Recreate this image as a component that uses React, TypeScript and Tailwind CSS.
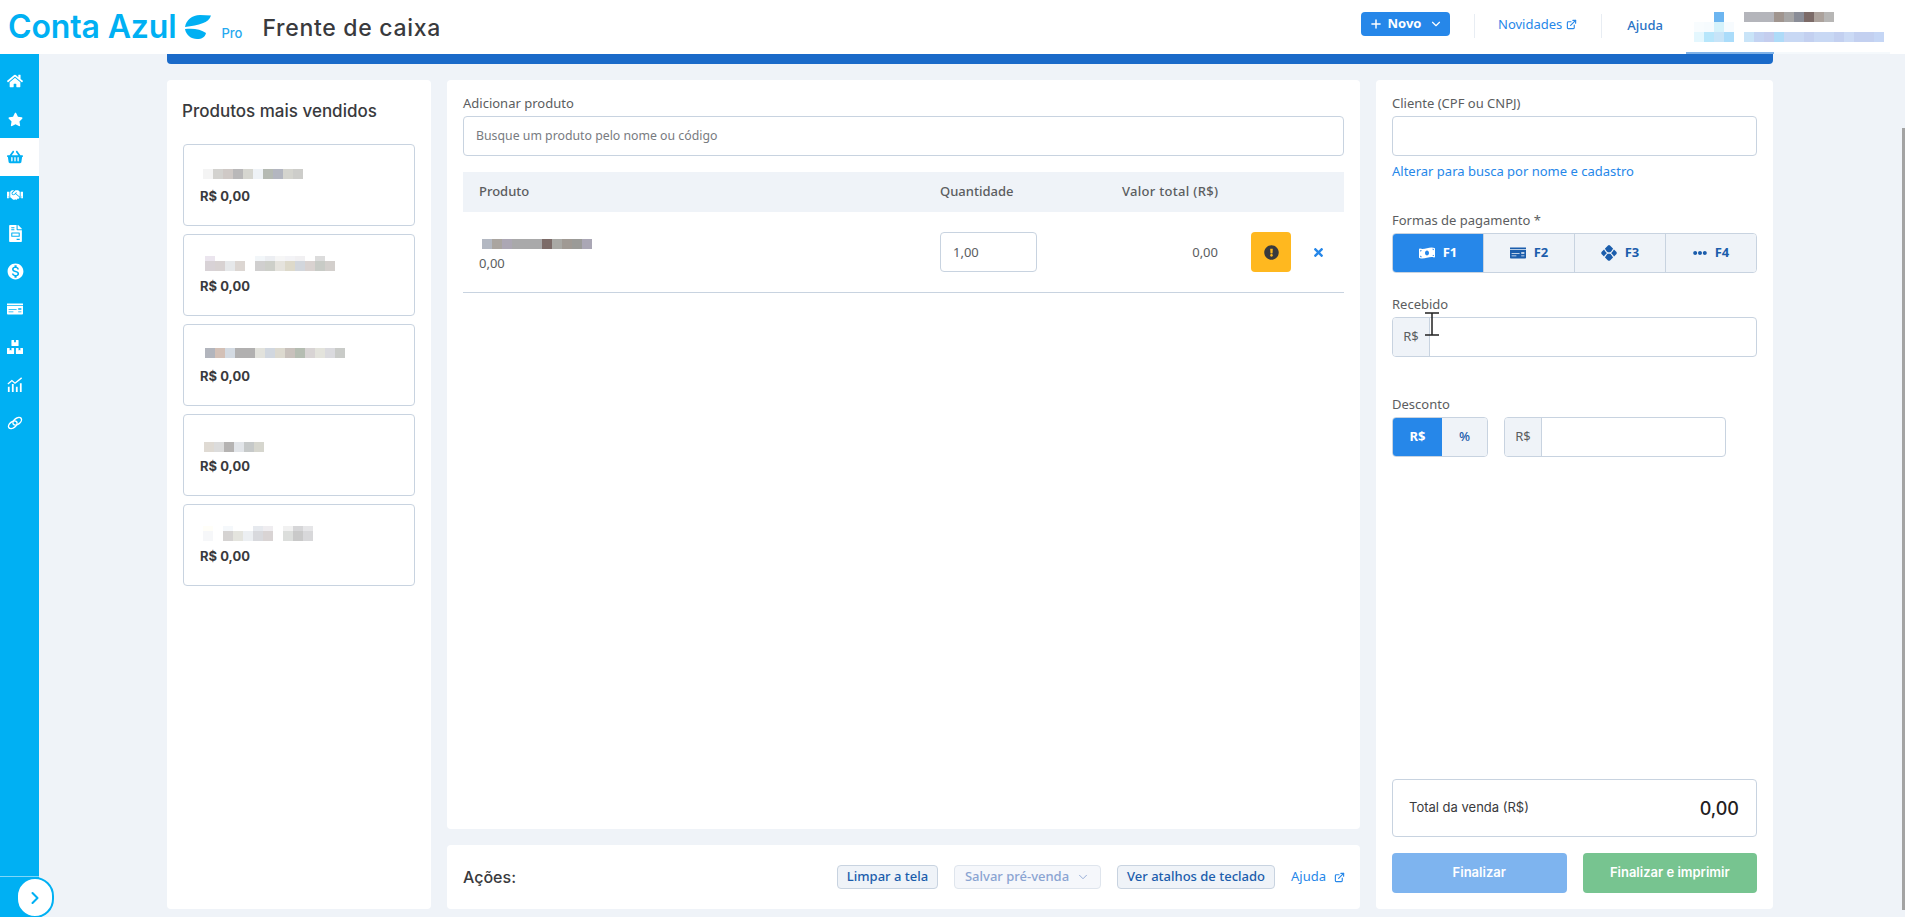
import { ChevronDown, ChevronRight, ExternalLink, Plus } from 'lucide-react'
import {
  FaBoxes,
  FaEllipsisH,
  FaExclamationCircle,
  FaFileInvoice,
  FaHandshake,
  FaHome,
  FaMoneyBillWave,
  FaMoneyCheck,
  FaShoppingBasket,
  FaStar,
  FaTimes,
} from 'react-icons/fa'
import { MdMonetizationOn } from 'react-icons/md'

const sans = 'font-["Noto_Sans",sans-serif]'
const display = 'font-["Inter",sans-serif]'

function ChartIcon() {
  return (
    <svg viewBox="0 0 18 18" className="w-[16px] h-[16px]" fill="none" stroke="currentColor">
      <path d="M1 8 L5.5 4 L9 7 L16.5 1" strokeWidth="1.5" />
      <path d="M2 17 V11 M6.5 17 V8 M11 17 V11 M15.5 17 V7" strokeWidth="2" />
    </svg>
  )
}

function LinkIcon() {
  return (
    <svg viewBox="0 0 18 18" className="w-[16px] h-[16px]" fill="none" stroke="currentColor" strokeWidth="1.6">
      <ellipse cx="6.5" cy="11" rx="5.5" ry="3.4" transform="rotate(-38 6.5 11)" />
      <ellipse cx="11.5" cy="7" rx="5.5" ry="3.4" transform="rotate(-38 11.5 7)" />
    </svg>
  )
}

function PixIcon() {
  return (
    <svg viewBox="0 0 16 16" className="w-4 h-4">
      <path
        d="M8 0 Q8.6 0 9 .5 L15.5 7 Q16 8 15.5 9 L9 15.5 Q8 16 7 15.5 L.5 9 Q0 8 .5 7 L7 .5 Q7.4 0 8 0 Z"
        fill="#1b5dac"
      />
      <path d="M3 3 Q8 13.5 13 3 M3 13 Q8 2.5 13 13" fill="none" stroke="#eff3f8" strokeWidth="1.2" />
    </svg>
  )
}

function LeafLogo() {
  return (
    <svg viewBox="0 0 26 24" className="w-[26px] h-[24px]" fill="#00b0f3">
      <path d="M26 .5 C24 8 14 10 0 12 C1 5 7 0 15 0 Z" />
      <path d="M0 14 C8 13 16 14 21 18 C20 22 17 24 12 24 C6 24 1 20 0 14 Z" />
    </svg>
  )
}

function Mosaic({ rows }: { rows: string[][] }) {
  return (
    <div className="flex flex-col">
      {rows.map((row, i) => (
        <div key={i} className="flex">
          {row.map((c, j) => (
            <div key={j} className="w-[10px] h-[10px]" style={{ backgroundColor: c }} />
          ))}
        </div>
      ))}
    </div>
  )
}

const w = '#ffffff'

const products = [
  {
    pad: 'pt-[24px] pl-[3px]',
    rows: [['#f4f4f4', '#d3d2cf', '#cfc9c6', '#b9b8b9', '#d6d6d0', '#eef2f6', '#b5bab3', '#b3b6c0', '#d4d4ce', '#cdcdca']],
  },
  {
    pad: 'pt-[21px] pl-[5px]',
    clipped: true,
    rows: [
      ['#ebe5ee', w, w, w, w, '#f2f6f9', '#eceef2', '#f6f6f6', '#f3f3f6', '#f1f0f2', w, '#dcdcdc'],
      ['#d8d2d6', '#d8d2d2', '#e6e8ea', '#dcd6d2', w, '#d0cfcf', '#cdcfc9', '#e5e3dd', '#ddd9ca', '#d2d6dc', '#d9d2d0', '#c8cbc6', '#d3cfcc'],
    ],
  },
  {
    pad: 'pt-[23px] pl-[5px]',
    rows: [['#b2b5bd', '#d3c0b6', '#d3dae2', '#b1b0b0', '#b1b0b0', '#e2e2dc', '#d1d7df', '#dcd9cf', '#c8c1bc', '#b5bdb2', '#d8d4d4', '#e3e3dc', '#dadade', '#c9cbc8']],
  },
  {
    pad: 'pt-[27px] pl-[4px]',
    rows: [['#dfdad3', '#dcdcdc', '#b5b3b2', '#e2e5e9', '#c6c9c9', '#d6d6ce']],
  },
  {
    pad: 'pt-[21px] pl-[3px]',
    clipped: true,
    rows: [
      ['#fffef8', w, '#f5f8fb', w, w, '#e6e9ee', '#efedf0', w, '#f1f1f1', '#d6d6d8', '#e6e6e8'],
      ['#f6f7f9', w, '#d5d3d2', '#e4e4de', '#eceff2', '#d8d9dd', '#d9d4d4', w, '#dcdedc', '#c9c9c9', '#d8d8da'],
    ],
  },
]

const sideItems = [
  <FaHome className="w-[16px] h-[16px]" />,
  <FaStar className="w-[15px] h-[15px]" />,
  <FaShoppingBasket className="w-[16px] h-[16px]" />,
  <FaHandshake className="w-[16px] h-[16px]" />,
  <FaFileInvoice className="w-[13px] h-[17px]" />,
  <MdMonetizationOn className="w-[19px] h-[19px]" />,
  <FaMoneyCheck className="w-[16px] h-[16px]" />,
  <FaBoxes className="w-[16px] h-[16px]" />,
  <ChartIcon />,
  <LinkIcon />,
]

const payments = [
  { key: 'F1', icon: <FaMoneyBillWave className="w-4 h-4" />, active: true },
  { key: 'F2', icon: <FaMoneyCheck className="w-4 h-4" /> },
  { key: 'F3', icon: <PixIcon /> },
  { key: 'F4', icon: <FaEllipsisH className="w-[14px] h-[14px]" /> },
]

function Sidebar() {
  return (
    <aside className="relative w-[39px] shrink-0 bg-[#00b0f3] text-white flex flex-col">
      <ul className="pt-[8px]">
        {sideItems.map((icon, i) => (
          <li
            key={i}
            className={`h-[38px] pr-[9px] flex items-center justify-center ${i === 2 ? 'bg-white text-[#00b0f3]' : ''}`}
          >
            {icon}
          </li>
        ))}
      </ul>
      <div className="mt-auto h-[41px] border-t border-[#7fd6f8]" />
      <button
        type="button"
        className="absolute left-[16px] bottom-[-1px] w-[38px] h-[41px] rounded-full bg-white border-2 border-[#00b0f3] flex items-center justify-center text-[#00b0f3]"
      >
        <ChevronRight className="w-5 h-5" strokeWidth={2.5} />
      </button>
    </aside>
  )
}

function Header() {
  return (
    <header className={`relative h-[54px] shrink-0 bg-white flex items-center ${sans}`}>
      <span className={`ml-[8px] text-[32px] leading-none font-semibold text-[#00b0f3] tracking-[-0.15px] ${display}`}>
        Conta Azul
      </span>
      <span className="ml-[9px]">
        <LeafLogo />
      </span>
      <span className={`ml-[10px] mt-[14px] text-[13px] font-medium text-[#26a9ef] ${display}`}>Pro</span>
      <h1 className={`ml-[20px] mt-[2px] text-[23px] font-medium text-[#393a3d] tracking-[0.7px] ${display}`}>Frente de caixa</h1>

      <button
        type="button"
        className="ml-auto mb-[6px] w-[89px] h-[24px] rounded-[4px] bg-[#2687e9] text-white text-[13px] font-bold flex items-center justify-center gap-[5px]"
      >
        <Plus className="w-[14px] h-[14px]" strokeWidth={2.5} />
        Novo
        <ChevronDown className="w-[14px] h-[14px] ml-[2px]" strokeWidth={2} />
      </button>
      <div className="ml-[24px] mb-[2px] w-[1px] h-[24px] bg-[#e8edf3]" />
      <a className="ml-[23px] mb-[5px] text-[13px] text-[#2687e9] flex items-center gap-[4px]">
        Novidades
        <ExternalLink className="w-[11px] h-[11px]" strokeWidth={2.5} />
      </a>
      <div className="ml-[24px] mb-[2px] w-[1px] h-[24px] bg-[#e8edf3]" />
      <a className="ml-[25px] mb-[2px] text-[13px] font-medium text-[#2a73c5]">Ajuda</a>

      <div className="ml-[31px] w-[211px] flex items-start gap-[10px] self-start pt-[12px]">
        <Mosaic
          rows={[
            [w, w, '#6cb5f0', w],
            ['#f8fcfe', '#f6fbfe', '#d5f2fb', '#f7fbfe'],
            ['#e4f7fe', '#b7e6fb', '#c7e4f8', '#aadcfa'],
          ]}
        />
        <div className="flex flex-col gap-[10px]">
          <Mosaic rows={[['#b4b5bb', '#b4b5bb', '#b4b5bb', '#a0958f', '#a7a6a6', '#8a8d97', '#7c6b68', '#aca29c', '#b7b6b5']]} />
          <Mosaic
            rows={[
              ['#c9e4f8', '#c3d3f2', '#c4cdee', '#aedbf8', '#c8d8f4', '#c8d8f4', '#c3d0f0', '#c8d8f4', '#c8d8f4', '#c3d0f0', '#cbdaf5', '#c3d0f0', '#c3d0f0', '#c5d6f5'],
            ]}
          />
        </div>
      </div>
      <div className="absolute left-[1686px] right-[15px] bottom-0 h-[2px] bg-[#f5f9fc]">
        <div className="w-[88px] h-[2px] bg-[#7fb2e8]" />
      </div>
    </header>
  )
}

function FieldLabel({ children }: { children: React.ReactNode }) {
  return <label className="block text-[13px] leading-[18px] text-[#5b5d60]">{children}</label>
}

function ProductsPanel() {
  return (
    <section className="w-[264px] shrink-0 bg-white rounded-[4px] pl-[15px] pr-[16px] pt-[20px]">
      <h2 className={`text-[17px] leading-[22px] font-medium text-[#393a3d] ${display}`}>Produtos mais vendidos</h2>
      <ul className="ml-[1px] mt-[22px] flex flex-col gap-[8px]">
        {products.map((p, i) => (
          <li key={i} className="relative h-[82px] rounded-[4px] border border-[#c8d3e0] pl-[16px]">
            <div className={`h-[42px] ${p.pad}`}>
              <div className={p.clipped ? 'h-[15px] overflow-hidden flex flex-col justify-end' : ''}>
                <Mosaic rows={p.rows} />
              </div>
            </div>
            <p className={`absolute left-[16px] top-[42px] text-[13px] leading-[18px] font-bold text-[#393a3d] ${display}`}>
              R$ 0,00
            </p>
          </li>
        ))}
      </ul>
    </section>
  )
}

function SalePanel() {
  return (
    <section className="flex-1 bg-white rounded-[4px] px-[16px] pt-[14px]">
      <FieldLabel>Adicionar produto</FieldLabel>
      <input
        readOnly
        placeholder="Busque um produto pelo nome ou código"
        className="mt-[4px] w-full h-[40px] rounded-[4px] border border-[#c8d3e0] px-[12px] pb-[2px] text-[12.3px] placeholder:text-[#787b7f] outline-none"
      />
      <div className="mt-[16px] h-[40px] bg-[#eff3f8] flex items-center text-[13px] font-medium text-[#5b5d60]">
        <span className="ml-[16px] w-[461px]">Produto</span>
        <span className="w-[182px]">Quantidade</span>
        <span className="tracking-[0.3px]">Valor total (R$)</span>
      </div>
      <div className="h-[81px] border-b border-[#c8d3e0] flex items-center text-[13px] leading-[18px] text-[#5b5d60]">
        <div className="ml-[16px] w-[461px] flex flex-col gap-[5px] pt-[7px]">
          <div className="ml-[3px]">
            <Mosaic rows={[['#b3b8c2', '#aaa5a0', '#aca7b4', '#a9a9aa', '#a9a9aa', '#a9a9aa', '#7c6b68', '#a9a9a5', '#a09a94', '#9b9b98', '#aaa7b5']]} />
          </div>
          <span>0,00</span>
        </div>
        <div className="w-[97px] h-[40px] rounded-[4px] border border-[#c8d3e0] flex items-center pl-[12px]">1,00</div>
        <span className="w-[181px] text-right">0,00</span>
        <button type="button" className="ml-[33px] w-[40px] h-[40px] rounded-[4px] bg-[#ffb81f] flex items-center justify-center">
          <FaExclamationCircle className="w-[15px] h-[15px] text-[#393a3d]" />
        </button>
        <button type="button" className="ml-[21px] text-[#2687e9]">
          <FaTimes className="w-[13px] h-[13px]" />
        </button>
      </div>
    </section>
  )
}

function ActionsBar() {
  return (
    <section className="h-[64px] shrink-0 bg-white rounded-[4px] pl-[16px] pr-[15px] flex items-center">
      <span className={`text-[16px] font-medium text-[#393a3d] ${display}`}>Ações:</span>
      <button type="button" className="ml-auto w-[101px] h-[24px] rounded-[4px] border border-[#c8d3e0] bg-[#eff3f8] text-[13px] font-medium text-[#1b5dac]">
        Limpar a tela
      </button>
      <button type="button" className="ml-[16px] w-[147px] h-[24px] rounded-[4px] border border-[#dfe5ed] bg-[#f5f7fb] text-[13px] font-medium text-[#8aa4d2] flex items-center justify-center gap-[7px]">
        Salvar pré-venda
        <ChevronDown className="w-[14px] h-[14px]" strokeWidth={1.5} />
      </button>
      <button type="button" className="ml-[16px] w-[158px] h-[24px] rounded-[4px] border border-[#c8d3e0] bg-[#eff3f8] text-[13px] font-medium text-[#1b5dac]">
        Ver atalhos de teclado
      </button>
      <a className="ml-[16px] text-[13px] text-[#2687e9] flex items-center gap-[8px]">
        Ajuda
        <ExternalLink className="w-[11px] h-[11px]" strokeWidth={2.5} />
      </a>
    </section>
  )
}

function Addon() {
  return (
    <span className="w-[37px] shrink-0 bg-[#eff3f8] border-r border-[#c8d3e0] flex items-center justify-center text-[13px] text-[#5b5d60]">
      R$
    </span>
  )
}

function CheckoutPanel() {
  return (
    <section className="relative w-[397px] shrink-0 bg-white rounded-[4px] px-[16px] pt-[14px] pb-[16px] flex flex-col">
      <FieldLabel>Cliente (CPF ou CNPJ)</FieldLabel>
      <div className="mt-[4px] h-[40px] rounded-[4px] border border-[#c8d3e0]" />
      <a className="mt-[6px] text-[13px] leading-[18px] text-[#2687e9]">Alterar para busca por nome e cadastro</a>

      <div className="mt-[31px]">
        <FieldLabel>Formas de pagamento *</FieldLabel>
      </div>
      <div className="mt-[4px] h-[40px] rounded-[4px] border border-[#c8d3e0] flex overflow-hidden">
        {payments.map((p) => (
          <button
            key={p.key}
            type="button"
            className={`flex-1 flex items-center justify-center gap-[8px] text-[13px] font-bold border-r border-[#c8d3e0] last:border-r-0 ${
              p.active ? 'bg-[#2687e9] text-white' : 'bg-[#eff3f8] text-[#1b5dac]'
            }`}
          >
            {p.icon}
            {p.key}
          </button>
        ))}
      </div>

      <div className="mt-[22px]">
        <FieldLabel>Recebido</FieldLabel>
      </div>
      <div className="mt-[4px] h-[40px] rounded-[4px] border border-[#c8d3e0] flex overflow-hidden">
        <Addon />
      </div>

      <div className="mt-[38px]">
        <FieldLabel>Desconto</FieldLabel>
      </div>
      <div className="mt-[4px] flex">
        <div className="w-[96px] h-[40px] rounded-[4px] border border-[#c8d3e0] flex overflow-hidden text-[13px] font-bold">
          <span className="w-[49px] bg-[#2687e9] text-white flex items-center justify-center">R$</span>
          <span className="flex-1 bg-[#eff3f8] text-[#1b5dac] flex items-center justify-center font-medium">%</span>
        </div>
        <div className="ml-[16px] w-[222px] h-[40px] rounded-[4px] border border-[#c8d3e0] flex overflow-hidden">
          <Addon />
        </div>
      </div>

      <div className="mt-auto h-[58px] rounded-[4px] border border-[#c8d3e0] flex items-center justify-between pl-[16px] pr-[17px]">
        <span className={`text-[13px] text-[#393a3d] ${display}`}>Total da venda (R$)</span>
        <span className={`text-[18px] font-medium text-[#1f2022] ${display}`}>0,00</span>
      </div>
      <div className="mt-[16px] flex gap-[16px]">
        <button type="button" className={`flex-1 h-[40px] rounded-[4px] bg-[#7eb4ef] text-white text-[13px] font-semibold ${display}`}>
          Finalizar
        </button>
        <button type="button" className={`flex-1 h-[40px] rounded-[4px] bg-[#77c490] text-white text-[13px] font-semibold ${display}`}>
          Finalizar e imprimir
        </button>
      </div>

      {/* mouse cursor caught in the screenshot */}
      <svg viewBox="0 0 14 24" className="absolute left-[49px] top-[232px] w-[14px] h-[24px]" fill="none" stroke="#222" strokeWidth="1.5">
        <path d="M0 1 H14 M0 23 H14 M7 1 V23" />
      </svg>
    </section>
  )
}

export default function App() {
  return (
    <div className={`relative h-[917px] overflow-hidden flex flex-col bg-[#eff3f8] ${sans}`}>
      <Header />
      <div className="flex-1 min-h-0 flex">
        <Sidebar />
        <main className="flex-1 min-w-0 pl-[128px] pr-[132px] pb-[8px] flex flex-col">
          <div className="h-[10px] shrink-0 bg-[#1a6ac9] rounded-b-[4px]" />
          <div className="mt-[16px] flex-1 min-h-0 flex gap-[16px]">
            <ProductsPanel />
            <div className="w-[913px] shrink-0 flex flex-col gap-[16px]">
              <SalePanel />
              <ActionsBar />
            </div>
            <CheckoutPanel />
          </div>
        </main>
      </div>
      {/* page scrollbar */}
      <div className="absolute right-0 top-[128px] w-[3px] h-[782px] bg-[#a3a3a3]" />
    </div>
  )
}
